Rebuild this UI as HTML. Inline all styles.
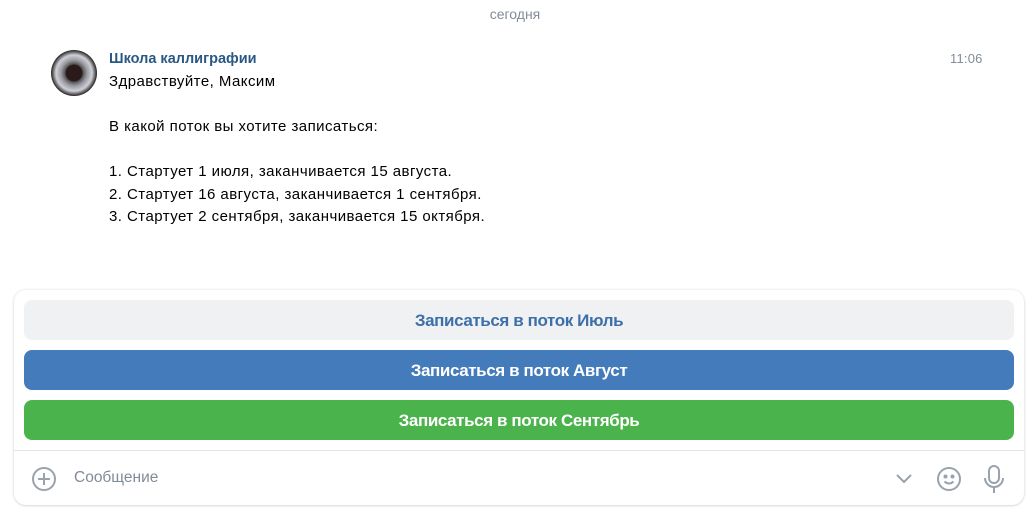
<!DOCTYPE html>
<html><head><meta charset="utf-8"><style>
body{margin:0;width:1030px;height:508px;background:#fff;font-family:"Liberation Sans",sans-serif;position:relative;overflow:hidden}
.a{position:absolute}
.btn{position:absolute;left:24px;width:990px;height:40px;border-radius:8px;text-align:center;line-height:42px;font-size:17px;font-weight:bold;letter-spacing:-0.4px}
</style></head><body>
<div class="a" style="top:6px;left:0;width:1030px;text-align:center;color:#818c99;font-size:14px">сегодня</div>
<div class="a" style="left:51px;top:50px;width:46px;height:46px;border-radius:50%;background:radial-gradient(circle,#2a1a1a 0 8px,#555 9px,#9a9aa4 13px,#cfcfd6 18px,#444 22px,#222 23px)"></div>
<div class="a" style="left:109px;top:51px;color:#2a5885;font-weight:bold;font-size:14.5px">Школа каллиграфии</div>
<div class="a" style="left:950px;top:51px;color:#818c99;font-size:13px;letter-spacing:0.2px">11:06</div>
<div class="a" style="left:109px;top:71px;font-size:15px;letter-spacing:0.45px;line-height:22.5px;color:#000">Здравствуйте, Максим<br><br>В какой поток вы хотите записаться:<br><br>1. Стартует 1 июля, заканчивается 15 августа.<br>2. Стартует 16 августа, заканчивается 1 сентября.<br>3. Стартует 2 сентября, заканчивается 15 октября.</div>
<div class="a" style="left:14px;top:290px;width:1010px;height:215px;border-radius:12px;background:#fff;box-shadow:0 0 3px rgba(0,0,0,.12),0 1px 2px rgba(0,0,0,.1)"></div>
<div class="btn" style="top:300px;background:#f0f1f3;color:#3d6fa8">Записаться в поток Июль</div>
<div class="btn" style="top:350px;background:#447bba;color:#fff">Записаться в поток Август</div>
<div class="btn" style="top:400px;background:#4bb34b;color:#fff">Записаться в поток Сентябрь</div>
<div class="a" style="left:14px;top:450px;width:1010px;height:1px;background:#e1e3e6"></div>
<svg class="a" style="left:31px;top:466px" width="26" height="26" viewBox="0 0 26 26" fill="none" stroke="#99a2ad" stroke-width="2"><circle cx="13" cy="13" r="11"/><path d="M13 7v12M7 13h12"/></svg>
<div class="a" style="left:74px;top:469px;color:#818c99;font-size:15.5px">Сообщение</div>
<svg class="a" style="left:893px;top:470px" width="22" height="16" viewBox="0 0 22 16" fill="none" stroke="#99a2ad" stroke-width="2"><path d="M4 5l7 7 7-7"/></svg>
<svg class="a" style="left:935px;top:465px" width="28" height="28" viewBox="0 0 28 28" fill="none" stroke="#99a2ad" stroke-width="2"><circle cx="14" cy="14" r="11"/><path d="M9.5 16.5q4.5 4 9 0"/><circle cx="10.5" cy="11.5" r="1" fill="#99a2ad"/><circle cx="17.5" cy="11.5" r="1" fill="#99a2ad"/></svg>
<svg class="a" style="left:982px;top:464px" width="24" height="32" viewBox="0 0 24 32" fill="none" stroke="#99a2ad" stroke-width="2"><rect x="7" y="2" width="10" height="17" rx="5"/><path d="M3 14a9 9 0 0 0 18 0M12 23v6"/></svg>
</body></html>
